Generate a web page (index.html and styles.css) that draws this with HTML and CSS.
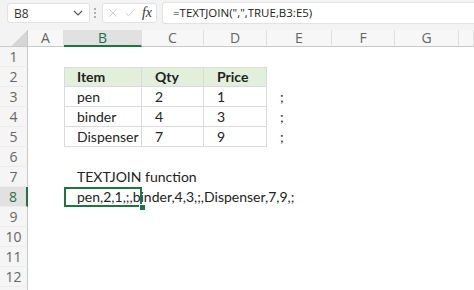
FILE: index.html
```html
<!DOCTYPE html>
<html lang="en">
<head>
    <meta charset="UTF-8">
    <title>TEXTJOIN function</title>
    <link rel="stylesheet" href="styles.css">
</head>
<body>

<div class="formula-bar">
    <div class="name-box">
        <span>B8</span>
        <svg class="chev" width="10" height="6" viewBox="0 0 10 6"><path d="M1 1l4 4 4-4" fill="none" stroke="#555" stroke-width="1.2"/></svg>
    </div>
    <svg class="grip" width="4" height="14" viewBox="0 0 4 14"><circle cx="2" cy="3" r="1" fill="#999"/><circle cx="2" cy="7" r="1" fill="#999"/><circle cx="2" cy="11" r="1" fill="#999"/></svg>
    <div class="fx-box">
        <svg width="14" height="14" viewBox="0 0 14 14"><path d="M2 2l10 10M12 2L2 12" stroke="#c4c4c4" stroke-width="1.2"/></svg>
        <svg width="14" height="14" viewBox="0 0 14 14"><path d="M1 7l4 4 8-9" fill="none" stroke="#c4c4c4" stroke-width="1.2"/></svg>
        <span class="fx">fx</span>
    </div>
    <div class="formula">=TEXTJOIN(",",TRUE,B3:E5)</div>
</div>

<div class="sheet">
    <!-- column headers -->
    <div class="corner"></div>
    <div class="col-head">A</div>
    <div class="col-head active">B</div>
    <div class="col-head">C</div>
    <div class="col-head">D</div>
    <div class="col-head">E</div>
    <div class="col-head">F</div>
    <div class="col-head">G</div>
    <div class="col-head"></div>

    <!-- row 1 -->
    <div class="row-head">1</div>
    <div></div><div></div><div></div><div></div><div></div><div></div><div></div><div></div>

    <!-- row 2 -->
    <div class="row-head">2</div>
    <div></div>
    <div class="cell tbl th">Item</div>
    <div class="cell tbl th">Qty</div>
    <div class="cell tbl th">Price</div>
    <div></div><div></div><div></div><div></div>

    <!-- row 3 -->
    <div class="row-head">3</div>
    <div></div>
    <div class="cell tbl">pen</div>
    <div class="cell tbl">2</div>
    <div class="cell tbl">1</div>
    <div class="cell">;</div>
    <div></div><div></div><div></div>

    <!-- row 4 -->
    <div class="row-head">4</div>
    <div></div>
    <div class="cell tbl">binder</div>
    <div class="cell tbl">4</div>
    <div class="cell tbl">3</div>
    <div class="cell">;</div>
    <div></div><div></div><div></div>

    <!-- row 5 -->
    <div class="row-head">5</div>
    <div></div>
    <div class="cell tbl">Dispenser</div>
    <div class="cell tbl">7</div>
    <div class="cell tbl">9</div>
    <div class="cell">;</div>
    <div></div><div></div><div></div>

    <!-- row 6 -->
    <div class="row-head">6</div>
    <div></div><div></div><div></div><div></div><div></div><div></div><div></div><div></div>

    <!-- row 7 -->
    <div class="row-head">7</div>
    <div></div>
    <div class="cell">TEXTJOIN function</div>
    <div></div><div></div><div></div><div></div><div></div><div></div>

    <!-- row 8 -->
    <div class="row-head active">8</div>
    <div></div>
    <div class="cell selected">pen,2,1,;,binder,4,3,;,Dispenser,7,9,;</div>
    <div></div><div></div><div></div><div></div><div></div><div></div>

    <div class="row-head">9</div>
    <div></div><div></div><div></div><div></div><div></div><div></div><div></div><div></div>
    <div class="row-head">10</div>
    <div></div><div></div><div></div><div></div><div></div><div></div><div></div><div></div>
    <div class="row-head">11</div>
    <div></div><div></div><div></div><div></div><div></div><div></div><div></div><div></div>
    <div class="row-head">12</div>
    <div></div><div></div><div></div><div></div><div></div><div></div><div></div><div></div>
    <div class="row-head"></div>
    <div></div><div></div><div></div><div></div><div></div><div></div><div></div><div></div>
</div>

</body>
</html>
```

FILE: styles.css
```css
body {
    margin: 0;
    background-color: #fff;
    font-family: Lato, "Liberation Sans", sans-serif;
    overflow: hidden;
}
.formula-bar {
    display: flex;
    align-items: center;
    height: 30px;
    padding: 0 0 4px 7px;
    box-sizing: border-box;
    background-color: #f3f3f3;
}
.name-box {
    display: flex;
    align-items: center;
    justify-content: space-between;
    width: 83px;
    height: 20px;
    padding: 0 6px 0 6px;
    box-sizing: border-box;
    background-color: #fff;
    border: 1px solid #e2e2e2;
    border-radius: 3px;
    font-family: "Open Sans", sans-serif;
    font-size: 12px;
    color: #333;
}
.grip {
    margin: 0 5px 0 3px;
}
.fx-box {
    display: flex;
    align-items: center;
    gap: 7px;
    width: 55px;
    height: 20px;
    padding: 0 4px 0 5px;
    box-sizing: border-box;
    background-color: #fff;
    border: 1px solid #e2e2e2;
    border-radius: 3px;
}
.fx {
    font-family: "Liberation Serif", serif;
    font-style: italic;
    font-size: 14px;
    color: #333;
}
.formula {
    flex: 1;
    height: 20px;
    margin-left: 5px;
    padding-left: 10px;
    background-color: #fff;
    border: 1px solid #e2e2e2;
    border-right: none;
    border-radius: 3px 0 0 3px;
    font-family: "Open Sans", sans-serif;
    font-size: 11.5px;
    line-height: 20px;
    color: #222;
}
.sheet {
    display: grid;
    grid-template-columns: 28px 36px 78px 62px 63px 65px 63px 64px 1fr;
    grid-template-rows: 17px repeat(13, 20px);
    font-size: 14px;
    color: #222;
}
.corner {
    background: linear-gradient(135deg, #f3f3f3 65%, #d6d6d6 65%);
    border-bottom: 1px solid #c8c8c8;
    border-right: 1px solid #c8c8c8;
}
.col-head {
    background-color: #f7f7f7;
    border-bottom: 1px solid #c8c8c8;
    border-right: 1px solid #e0e0e0;
    text-align: center;
    font-family: "Open Sans", sans-serif;
    font-size: 14px;
    line-height: 16px;
    color: #666;
}
.col-head.active {
    background-color: #e1e1e1;
    color: #217346;
    border-bottom: 2px solid #217346;
}
.row-head {
    background-color: #f5f5f5;
    border-right: 1px solid #c8c8c8;
    border-bottom: 1px solid #ececec;
    text-align: center;
    font-family: "Open Sans", sans-serif;
    font-size: 14px;
    line-height: 19px;
    color: #666;
}
.row-head.active {
    background-color: #e1e1e1;
    color: #217346;
    border-right: 2px solid #217346;
}
.cell {
    padding-left: 13px;
    line-height: 20px;
    white-space: nowrap;
}
.tbl {
    border-right: 1px solid #dadada;
    border-bottom: 1px solid #dadada;
    line-height: 19px;
}
.tbl:nth-child(9n+3) {
    border-left: 1px solid #dadada;
    padding-left: 12px;
}
.th {
    background-color: #e2efda;
    font-weight: bold;
    border-top: 1px solid #dadada;
    line-height: 18px;
}
.selected {
    position: relative;
}
.selected::after {
    content: "";
    position: absolute;
    left: 0;
    top: 0;
    width: 78px;
    height: 20px;
    box-sizing: border-box;
    border: 2px solid #217346;
}
.selected::before {
    content: "";
    position: absolute;
    left: 75px;
    top: 17px;
    width: 5px;
    height: 5px;
    background-color: #217346;
    border: 1px solid #fff;
    z-index: 1;
}
```
